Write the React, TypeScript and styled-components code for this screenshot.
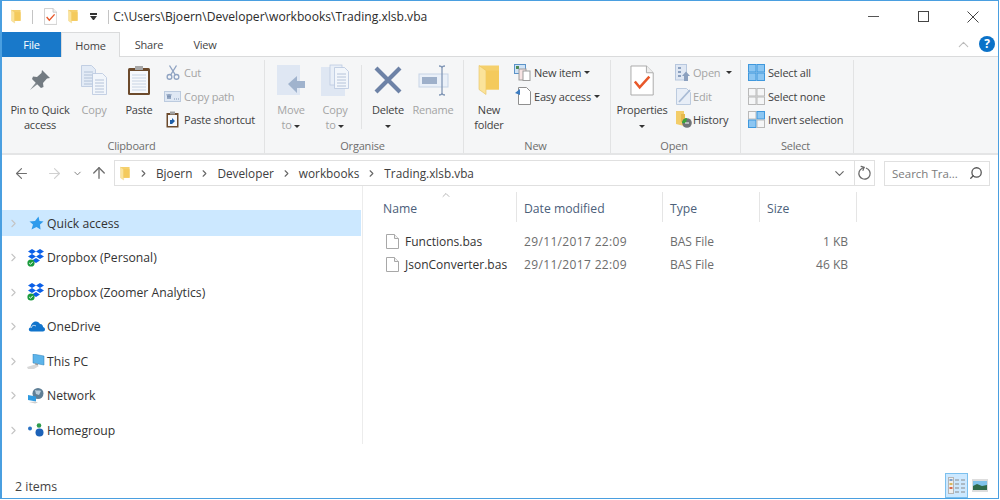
import React from 'react';
import styled, { createGlobalStyle } from 'styled-components';
import { ArrowLeft, ArrowRight, ArrowUp, ChevronDown, ChevronRight, ChevronUp, RotateCw, Search } from 'lucide-react';

const GlobalStyle = createGlobalStyle`
  html, body { margin: 0; padding: 0; background: #fff; }
  * { box-sizing: border-box; }
  body { font-family: "Open Sans", "Noto Sans", sans-serif; font-size: 11px; letter-spacing: -0.2px; color: #3f3f3f; }
`;

// ---- icons ----
const Fold = ({ w, h }: { w: number; h: number }) => (
  <svg width={w} height={h} viewBox="0 0 22 30">
    <path d="M1 0.5h20v24H6z" fill="#f5d06c" />
    <path d="M1 0.5l7 5v24l-7-5z" fill="#fbe39a" stroke="#e8c25f" strokeWidth="0.6" />
    <path d="M8 5.5h13v19H8z" fill="#f4ca5c" />
  </svg>
);

const CheckPage = ({ s }: { s: number }) => (
  <svg width={s * 0.78} height={s} viewBox="0 0 25 32">
    <path d="M1 1h16l7 7v23H1z" fill="#fff" stroke="#a9a9a9" />
    <path d="M17 1v7h7" fill="#eee" stroke="#a9a9a9" />
    <path d="M5 17l5 6 10-11" fill="none" stroke="#e8582a" strokeWidth="2.6" />
  </svg>
);

const Pin = () => (
  <svg width="24" height="24" viewBox="0 0 24 24">
    <path d="M2 22l7-9 2 2z" fill="#858c92" />
    <path d="M14 2l8 8-3 .5-4 4.500.5 4-2.500 1-9-9 1-2.500 4 .5 4.500-4z" fill="#737b82" />
  </svg>
);

const PageLines = ({ x, y, fill = '#e3ebf6' }: { x: number; y: number; fill?: string }) => (
  <g transform={`translate(${x} ${y})`}>
    <path d="M.5.5h10l4 4v17H.5z" fill={fill} stroke="#b7c7de" strokeWidth="0.8" />
    <path d="M3 7h9M3 10h9M3 13h9M3 16h9M3 19h9" stroke="#a6b8d2" strokeWidth="0.8" />
  </g>
);

const CopyLarge = () => (
  <svg width="27" height="31" viewBox="0 0 27 31">
    <PageLines x={0} y={0} />
    <PageLines x={11} y={8} fill="#f2f6fb" />
  </svg>
);

const Clipboard = () => (
  <svg width="24" height="31" viewBox="0 0 24 31">
    <rect x="1" y="3" width="22" height="27" rx="1.500" fill="#6c4a2c" />
    <rect x="3" y="6" width="18" height="22" fill="#f6f8fb" />
    <path d="M5 10h14M5 13h14M5 16h14M5 19h14M5 22h14M5 25h14" stroke="#c8d4e4" />
    <rect x="8" y="1" width="8" height="4" fill="#a7a7a7" />
  </svg>
);

const Cut = () => (
  <svg width="14" height="17" viewBox="0 0 16 18" fill="none" stroke="#8fa3c2" strokeWidth="1.500">
    <circle cx="4" cy="14" r="2.700" />
    <circle cx="12" cy="14" r="2.700" />
    <path d="M5.500 11.500L12 1M10.500 11.500L4 1" />
  </svg>
);

const CopyPath = () => (
  <svg width="17" height="11" viewBox="0 0 17 11">
    <rect x="0.500" y="0.500" width="16" height="10" fill="#dfe8f4" stroke="#bccbdf" />
    <path d="M3 3l1 5 1-5 1 5 1-5" fill="none" stroke="#7f95b5" />
    <path d="M10 8h1M12 8h1M14 8h1" stroke="#7f95b5" />
  </svg>
);

const PasteShortcut = () => (
  <svg width="13" height="17" viewBox="0 0 13 17">
    <rect x="0.500" y="2" width="12" height="14.500" fill="#6c4a2c" />
    <rect x="2" y="4" width="9" height="11" fill="#f6f8fb" />
    <rect x="4" y="0.500" width="5" height="3" fill="#a0a0a0" />
    <path d="M4 13V9h2V7l3 3-3 3z" fill="#1f5fa8" />
  </svg>
);

const MoveTo = () => (
  <svg width="30" height="31" viewBox="0 0 30 31">
    <rect x="1" y="0" width="23" height="30" fill="#dfe7f3" />
    <path d="M12 19l9-8v5h8v7h-8v5z" fill="#a0b3cd" />
  </svg>
);

const CopyTo = () => (
  <svg width="30" height="33" viewBox="0 0 30 33">
    <rect x="1" y="3" width="24" height="29" fill="#dfe7f3" />
    <rect x="10" y="1" width="12" height="20" fill="#e9eff7" stroke="#b7c7de" strokeWidth="0.700" />
    <PageLines x={14} y={3} fill="#f2f6fb" />
  </svg>
);

const DeleteX = () => (
  <svg width="28" height="28" viewBox="0 0 28 28">
    <path d="M2 2l24 24M26 2L2 26" stroke="#6d82a6" strokeWidth="4.200" />
  </svg>
);

const RenameIcon = () => (
  <svg width="31" height="31" viewBox="0 0 31 31">
    <rect x="1" y="9" width="29" height="13" fill="#eaf0f8" stroke="#c7d4e6" />
    <rect x="4" y="12" width="15" height="7" fill="#9eb0ca" />
    <path d="M21 1c2 0 3 .5 3 2v25c0 1.500 1 2 3 2M27 1c-2 0-3 .5-3 2M21 30c2 0 3-.5 3-2" fill="none" stroke="#8297b6" strokeWidth="1.300" />
  </svg>
);

const NewItem = () => (
  <svg width="17" height="17" viewBox="0 0 17 17">
    <rect x="0.500" y="0.500" width="11" height="9" fill="#cfe3f6" stroke="#5c93c8" />
    <rect x="2" y="2" width="3" height="3" fill="#4f8c57" />
    <rect x="5" y="5" width="7" height="11" fill="#f7e3e3" stroke="#9b9b9b" />
    <rect x="9" y="7" width="7" height="9.500" fill="#fff" stroke="#9b9b9b" />
  </svg>
);

const EasyAccess = () => (
  <svg width="16" height="18" viewBox="0 0 16 18">
    <path d="M3.500.5h8l4 4v13h-12z" fill="#fff" stroke="#8f8f8f" />
    <path d="M0 6l5-4v6z" fill="#3d7cc0" />
  </svg>
);

const OpenIcon = () => (
  <svg width="17" height="17" viewBox="0 0 17 17">
    <rect x="0.500" y="0.500" width="11" height="15.500" fill="#dfe7f3" stroke="#b7c7de" />
    <path d="M3 3h3v2H3zM3 7h3v2H3zM3 11h3v2H3z" fill="#8ba0bf" />
    <path d="M7 12l4-4.500 4 4.500h-2v5H9v-5z" fill="#8ba0bf" />
  </svg>
);

const EditIcon = () => (
  <svg width="15" height="17" viewBox="0 0 15 17">
    <path d="M.5.5h10l4 4v12H.5z" fill="#e8eef7" stroke="#bccbdf" />
    <path d="M3 14L14 2" stroke="#a9bbd5" strokeWidth="1.800" />
  </svg>
);

const HistoryIcon = () => (
  <svg width="16" height="17" viewBox="0 0 16 17">
    <path d="M0 0h8v15l-8-2z" fill="#f3cd69" />
    <path d="M5 3h4v8H5z" fill="#e6b94c" />
    <circle cx="11" cy="12" r="4.800" fill="#6f7478" />
    <path d="M6 12a5 5 0 0 1 5-5l-1 5z" fill="#3aa33a" />
    <path d="M9 12h4" stroke="#fff" />
  </svg>
);

const SelectGrid = ({ on }: { on: boolean[] }) => (
  <svg width="17" height="17" viewBox="0 0 17 17">
    {[0, 1, 2, 3].map((i) => (
      <rect
        key={i}
        x={i % 2 === 0 ? 0.5 : 9}
        y={i < 2 ? 0.5 : 9}
        width="7.500"
        height="7.500"
        fill={on[i] ? '#8cc6f2' : '#f5f6f7'}
        stroke={on[i] ? '#3f98dd' : '#b9b9b9'}
      />
    ))}
  </svg>
);

const SmallFile = () => (
  <svg width="13" height="15" viewBox="0 0 13 15">
    <path d="M.5.5h8l4 4v10H.5z" fill="#fff" stroke="#a8a8a8" />
    <path d="M8.500.5v4h4" fill="#f2f2f2" stroke="#a8a8a8" />
  </svg>
);

const Star = () => (
  <svg width="15" height="15" viewBox="0 0 15 15">
    <path d="M9.500.5l1 4.500 4 .5-3.500 3 .5 5-4-2.500-5 2.500 1.500-5L.5 5.500l5.500-.5z" fill="#2e9bec" />
  </svg>
);

const Dropbox = () => (
  <svg width="18" height="18" viewBox="0 0 18 18">
    <path d="M5 0l4 2.500L5 5 1 2.500zM13 0l4 2.500L13 5 9 2.500zM5 5l4 2.500L5 10 1 7.500zM13 5l4 2.500L13 10 9 7.500zM9 9l4 2.500L9 14l-4-2.500z" fill="#0a5fe8" />
    <circle cx="4" cy="14" r="3.600" fill="#1a9b3c" />
    <path d="M2.200 14l1.300 1.300 2.300-2.500" fill="none" stroke="#fff" strokeWidth="1" />
  </svg>
);

const OneDrive = () => (
  <svg width="17" height="11" viewBox="0 0 17 11">
    <path d="M3 10.500C.5 10.500 0 7 2.500 6.500 3 3 5 .5 8 .5c2 0 3 1 4 2.500 2.500 0 3 2 3 3 1.500.5 2 1.500 2 2.500s-1 2-2 2z" fill="#1174cc" />
    <path d="M3 7C4 4 6 4 8 5" fill="none" stroke="#fff" strokeWidth="0.800" />
  </svg>
);

const ThisPC = () => (
  <svg width="18" height="15" viewBox="0 0 18 15">
    <path d="M6 0l11 2v9L6 9z" fill="#5db4ea" stroke="#2b7fb8" strokeWidth="0.500" />
    <path d="M0 13l8-2.500 4 1.500-5 3H1z" fill="#d8d8d8" />
    <path d="M8 9l3 1v1.500L8 10.500z" fill="#9a9a9a" />
  </svg>
);

const Network = () => (
  <svg width="16" height="16" viewBox="0 0 16 16">
    <circle cx="10" cy="5.500" r="5.500" fill="#5f7f96" />
    <path d="M7 2c2 1 5 0 6 1l-2 4-3-1z" fill="#b9cddb" />
    <path d="M0 7l8 1.500v5L0 12z" fill="#2f9ae0" />
    <path d="M1 14l6 1.500 3-1-3-1z" fill="#cfcfcf" />
  </svg>
);

const Homegroup = () => (
  <svg width="16" height="14" viewBox="0 0 16 14">
    <circle cx="2" cy="5.500" r="2" fill="#2a72c4" />
    <circle cx="11" cy="2.500" r="2.300" fill="#2e9b4c" />
    <circle cx="11.500" cy="9.500" r="4" fill="#1d62b8" />
  </svg>
);

const DetailsView = () => (
  <svg width="18" height="17" viewBox="0 0 18 17">
    <rect x="0.500" y="0.500" width="5" height="16" fill="#eee" stroke="#b5b5b5" />
    <path d="M1.500 3h3" stroke="#7da0c8" strokeWidth="2" />
    <path d="M1.500 7h3" stroke="#d8b860" strokeWidth="2" />
    <path d="M1.500 11h3" stroke="#d9664a" strokeWidth="2" />
    <path d="M7 3h4M13 3h4M7 7h4M13 7h4M7 11h4M13 11h4M7 15h4M13 15h4" stroke="#8a8a8a" />
  </svg>
);

const ThumbView = () => (
  <svg width="16" height="13" viewBox="0 0 16 13">
    <rect x="0" y="0" width="16" height="13" fill="#ddd" />
    <rect x="1" y="2" width="14" height="9" fill="#7fc2ea" />
    <path d="M1 7l4-2 5 2 5-1v5H1z" fill="#2f6a4a" />
  </svg>
);

// ---- data ----
const navItems = [
  { label: 'Quick access', icon: <Star />, selected: true },
  { label: 'Dropbox (Personal)', icon: <Dropbox /> },
  { label: 'Dropbox (Zoomer Analytics)', icon: <Dropbox /> },
  { label: 'OneDrive', icon: <OneDrive /> },
  { label: 'This PC', icon: <ThisPC /> },
  { label: 'Network', icon: <Network /> },
  { label: 'Homegroup', icon: <Homegroup /> },
];

const files = [
  { name: 'Functions.bas', date: '29/11/2017 22:09', type: 'BAS File', size: '1 KB' },
  { name: 'JsonConverter.bas', date: '29/11/2017 22:09', type: 'BAS File', size: '46 KB' },
];

const App: React.FC = () => (
  <Frame>
    <GlobalStyle />
    <TitleBar>
      <QuickIcons>
        <Fold w={10} h={15} />
        <TitleSep />
        <CheckPage s={17} />
        <Fold w={10} h={15} />
        <QatDrop />
        <TitleSep />
      </QuickIcons>
      <TitleText>C:\Users\Bjoern\Developer\workbooks\Trading.xlsb.vba</TitleText>
      <WindowControls>
        <WinBtn>
          <svg width="11" height="11" viewBox="0 0 11 11"><path d="M0 5.500h11" stroke="#555" /></svg>
        </WinBtn>
        <WinBtn>
          <svg width="11" height="11" viewBox="0 0 11 11"><rect x="0.500" y="0.500" width="10" height="10" fill="none" stroke="#444" /></svg>
        </WinBtn>
        <WinBtn>
          <svg width="12" height="12" viewBox="0 0 12 12"><path d="M.5.5l11 11M11.500.5l-11 11" stroke="#444" /></svg>
        </WinBtn>
      </WindowControls>
    </TitleBar>

    <TabStrip>
      <FileTab>File</FileTab>
      <HomeTab>Home</HomeTab>
      <Tab $w={58}>Share</Tab>
      <Tab $w={54}>View</Tab>
      <TabRight>
        <ChevronUp size={17} color="#bdbdbd" strokeWidth={1.5} />
        <HelpBadge>?</HelpBadge>
      </TabRight>
    </TabStrip>

    <Ribbon>
      <Group $w={263}>
        <GroupBody>
          <LeadIn $w={6} />
          <LargeBtn $w={64}>
            <IconSlot><Pin /></IconSlot>
            <span>Pin to Quick</span>
            <span>access</span>
          </LargeBtn>
          <LargeBtn $w={44} $off>
            <IconSlot><CopyLarge /></IconSlot>
            <span>Copy</span>
          </LargeBtn>
          <LargeBtn $w={46}>
            <IconSlot><Clipboard /></IconSlot>
            <span>Paste</span>
          </LargeBtn>
          <SmallCol $left={2} $labelGap={3}>
            <SmallBtn $off><SmallIcon><Cut /></SmallIcon>Cut</SmallBtn>
            <SmallBtn $off><SmallIcon><CopyPath /></SmallIcon>Copy path</SmallBtn>
            <SmallBtn><SmallIcon><PasteShortcut /></SmallIcon>Paste shortcut</SmallBtn>
          </SmallCol>
        </GroupBody>
        <GroupLabel>Clipboard</GroupLabel>
      </Group>

      <Group $w={199}>
        <GroupBody>
          <LargeBtn $w={52} $off>
            <IconSlot><MoveTo /></IconSlot>
            <span>Move</span>
            <span>to <CaretMark /></span>
          </LargeBtn>
          <LargeBtn $w={36} $off>
            <IconSlot><CopyTo /></IconSlot>
            <span>Copy</span>
            <span>to <CaretMark /></span>
          </LargeBtn>
          <RibbonDivider />
          <LargeBtn $w={36}>
            <IconSlot><DeleteX /></IconSlot>
            <span>Delete</span>
            <span><CaretMark /></span>
          </LargeBtn>
          <LargeBtn $w={54} $off>
            <IconSlot><RenameIcon /></IconSlot>
            <span>Rename</span>
          </LargeBtn>
        </GroupBody>
        <GroupLabel>Organise</GroupLabel>
      </Group>

      <Group $w={147}>
        <GroupBody>
          <LeadIn $w={2} />
          <LargeBtn $w={46}>
            <IconSlot><Fold w={22} h={30} /></IconSlot>
            <span>New</span>
            <span>folder</span>
          </LargeBtn>
          <SmallCol $left={2} $labelGap={3}>
            <SmallBtn><SmallIcon><NewItem /></SmallIcon>New item <CaretMark /></SmallBtn>
            <SmallBtn><SmallIcon><EasyAccess /></SmallIcon>Easy access <CaretMark /></SmallBtn>
          </SmallCol>
        </GroupBody>
        <GroupLabel>New</GroupLabel>
      </Group>

      <Group $w={130}>
        <GroupBody>
          <LeadIn $w={1} />
          <LargeBtn $w={60}>
            <IconSlot><CheckPage s={31} /></IconSlot>
            <span>Properties</span>
            <span><CaretMark /></span>
          </LargeBtn>
          <SmallCol $left={3} $labelGap={1}>
            <SmallBtn $off><SmallIcon><OpenIcon /></SmallIcon>Open <CaretMark $shift={5} /></SmallBtn>
            <SmallBtn $off><SmallIcon><EditIcon /></SmallIcon>Edit</SmallBtn>
            <SmallBtn><SmallIcon><HistoryIcon /></SmallIcon>History</SmallBtn>
          </SmallCol>
        </GroupBody>
        <GroupLabel>Open</GroupLabel>
      </Group>

      <Group $w={113}>
        <GroupBody>
          <SmallCol $left={7} $labelGap={3}>
            <SmallBtn><SmallIcon><SelectGrid on={[true, true, true, true]} /></SmallIcon>Select all</SmallBtn>
            <SmallBtn><SmallIcon><SelectGrid on={[false, false, false, false]} /></SmallIcon>Select none</SmallBtn>
            <SmallBtn><SmallIcon><SelectGrid on={[false, true, true, false]} /></SmallIcon>Invert selection</SmallBtn>
          </SmallCol>
        </GroupBody>
        <GroupLabel>Select</GroupLabel>
      </Group>
    </Ribbon>

    <AddressRow>
      <NavButtons>
        <NavBtn $w={32}><ArrowLeft size={17} color="#6f6f6f" strokeWidth={1.6} /></NavBtn>
        <NavBtn $w={34}><ArrowRight size={17} color="#d0d0d0" strokeWidth={1.6} /></NavBtn>
        <NavBtn $w={14}><ChevronDown size={11} color="#777" strokeWidth={2} /></NavBtn>
        <NavBtn $w={30}><ArrowUp size={18} color="#6f6f6f" strokeWidth={1.8} /></NavBtn>
      </NavButtons>
      <AddressBox>
        <Fold w={10} h={15} />
        <Crumbs>
          <ChevronRight size={11} color="#666" strokeWidth={2.4} />
          <Crumb>Bjoern</Crumb>
          <ChevronRight size={11} color="#666" strokeWidth={2.4} />
          <Crumb>Developer</Crumb>
          <ChevronRight size={11} color="#666" strokeWidth={2.4} />
          <Crumb>workbooks</Crumb>
          <ChevronRight size={11} color="#666" strokeWidth={2.4} />
          <Crumb>Trading.xlsb.vba</Crumb>
        </Crumbs>
        <ChevronDown size={15} color="#666" strokeWidth={1.8} />
      </AddressBox>
      <RefreshBox><RefreshGlyph><RotateCw size={15} color="#6a6a6a" strokeWidth={2} /></RefreshGlyph></RefreshBox>
      <SearchBox>
        <span>Search Tra...</span>
        <MirrorIcon><Search size={14} color="#555" strokeWidth={2.2} /></MirrorIcon>
      </SearchBox>
    </AddressRow>

    <Main>
      <NavPane>
        {navItems.map((item) => (
          <NavRow key={item.label} $selected={item.selected}>
            <ChevronRight size={13} color="#c4c4c4" strokeWidth={2} />
            <NavIcon>{item.icon}</NavIcon>
            <span>{item.label}</span>
          </NavRow>
        ))}
      </NavPane>
      <Content>
        <HeaderRow>
          <SortCaret><ChevronUp size={12} color="#9a9a9a" strokeWidth={1.4} /></SortCaret>
          <HeaderCell $first>Name</HeaderCell>
          <HeaderCell>Date modified</HeaderCell>
          <HeaderCell>Type</HeaderCell>
          <HeaderCell>Size</HeaderCell>
        </HeaderRow>
        <FileList>
          {files.map((f) => (
            <FileRow key={f.name}>
              <NameCell><SmallFile />{f.name}</NameCell>
              <DateCell>{f.date}</DateCell>
              <MetaCell>{f.type}</MetaCell>
              <SizeCell>{f.size}</SizeCell>
            </FileRow>
          ))}
        </FileList>
      </Content>
    </Main>

    <StatusBar>
      <StatusText>2 items</StatusText>
      <ViewSwitch>
        <ViewBtn $w={23} $active><DetailsView /></ViewBtn>
        <ViewBtn $w={18}><ThumbView /></ViewBtn>
      </ViewSwitch>
    </StatusBar>
  </Frame>
);

// ---- styled ----
const Frame = styled.div`
  width: 999px;
  height: 499px;
  display: flex;
  flex-direction: column;
  background: #fff;
  border: 1px solid #4a9fe0;
  border-left-width: 2px;
  overflow: hidden;
`;

const TitleBar = styled.div`
  height: 31px;
  flex: none;
  display: flex;
  align-items: center;
  padding-left: 9px;
`;

const QuickIcons = styled.div`
  display: flex;
  align-items: center;
  gap: 11px;
`;

const TitleSep = styled.div`
  width: 1px;
  height: 14px;
  background: #c4c4c4;
`;

const QatDrop = styled.div`
  width: 7px;
  height: 7px;
  margin-left: 1px;
  border-top: 2px solid #333;
  &::after {
    content: '';
    display: block;
    margin-top: 1px;
    border: 3.5px solid transparent;
    border-top: 4px solid #333;
    border-bottom: 0;
  }
`;

const TitleText = styled.div`
  margin-left: 4px;
  font-size: 12.1px;
  letter-spacing: 0;
  color: #2b2b2b;
  white-space: nowrap;
`;

const WindowControls = styled.div`
  margin-left: auto;
  display: flex;
`;

const WinBtn = styled.div`
  width: 50px;
  height: 30px;
  display: flex;
  align-items: center;
  justify-content: center;
`;

const TabStrip = styled.div`
  height: 25px;
  flex: none;
  display: flex;
  align-items: stretch;
`;

const FileTab = styled.div`
  width: 59px;
  display: flex;
  align-items: center;
  justify-content: center;
  background: #1979ca;
  color: #fff;
`;

const HomeTab = styled.div`
  width: 59px;
  display: flex;
  align-items: center;
  justify-content: center;
  background: #f5f6f7;
  border: 1px solid #dadbdc;
  border-bottom: 0;
  color: #444;
`;

const Tab = styled.div<{ $w: number }>`
  width: ${({ $w }) => $w}px;
  display: flex;
  align-items: center;
  justify-content: center;
  color: #444;
  border-bottom: 1px solid #dadbdc;
`;

const TabRight = styled.div`
  flex: 1;
  display: flex;
  align-items: center;
  justify-content: flex-end;
  gap: 7px;
  padding-right: 3px;
  border-bottom: 1px solid #dadbdc;
`;

const HelpBadge = styled.div`
  width: 16px;
  height: 16px;
  border-radius: 50%;
  background: #0b72c8;
  color: #fff;
  font-size: 12px;
  font-weight: 700;
  line-height: 16px;
  text-align: center;
`;

const Ribbon = styled.div`
  height: 98px;
  flex: none;
  display: flex;
  background: #f5f6f7;
  border-bottom: 2px solid #e4e5e6;
`;

const Group = styled.div<{ $w: number }>`
  width: ${({ $w }) => $w}px;
  flex: none;
  display: flex;
  flex-direction: column;
  margin-top: 3px;
  border-right: 1px solid #e2e3e4;
`;

const GroupBody = styled.div`
  flex: 1;
  min-height: 0;
  display: flex;
  align-items: flex-start;
  padding-top: 2px;
`;

const LeadIn = styled.div<{ $w: number }>`
  width: ${({ $w }) => $w}px;
  flex: none;
`;

const GroupLabel = styled.div`
  height: 18px;
  padding-right: 3px;
  text-align: center;
  color: #6e6e6e;
  line-height: 22px;
`;

const LargeBtn = styled.div<{ $w: number; $off?: boolean }>`
  width: ${({ $w }) => $w}px;
  flex: none;
  display: flex;
  flex-direction: column;
  align-items: center;
  white-space: nowrap;
  line-height: 15px;
  color: ${({ $off }) => ($off ? '#a4a4a4' : '#3f3f3f')};
`;

const IconSlot = styled.div`
  height: 36px;
  margin-bottom: 4px;
  display: flex;
  align-items: center;
  justify-content: center;
`;

const CaretMark = styled.span<{ $shift?: number }>`
  display: inline-block;
  vertical-align: middle;
  margin-left: ${({ $shift }) => $shift ?? 0}px;
  border: 3px solid transparent;
  border-top: 3.5px solid #333;
  border-bottom: 0;
`;

const RibbonDivider = styled.div`
  width: 1px;
  height: 64px;
  flex: none;
  margin: 3px 8px 0;
  background: #e2e3e4;
`;

const SmallBtn = styled.div<{ $off?: boolean }>`
  height: 23.5px;
  display: flex;
  align-items: center;
  white-space: nowrap;
  color: ${({ $off }) => ($off ? '#a4a4a4' : '#3f3f3f')};
`;

const SmallCol = styled.div<{ $left: number; $labelGap: number }>`
  display: flex;
  flex-direction: column;
  margin-left: ${({ $left }) => $left}px;
  margin-top: -1px;

  ${SmallBtn} {
    gap: ${({ $labelGap }) => $labelGap}px;
  }
`;

const SmallIcon = styled.div`
  width: 17px;
  display: flex;
  align-items: center;
  justify-content: center;
`;

const AddressRow = styled.div`
  height: 31px;
  flex: none;
  display: flex;
  align-items: center;
  padding-top: 5px;
`;

const NavButtons = styled.div`
  display: flex;
  align-items: center;
  padding-left: 4px;
  width: 112px;
`;

const NavBtn = styled.div<{ $w: number }>`
  width: ${({ $w }) => $w}px;
  display: flex;
  align-items: center;
  justify-content: center;
`;

const AddressBox = styled.div`
  width: 740px;
  height: 26px;
  display: flex;
  align-items: center;
  padding: 0 7px 0 5px;
  border: 1px solid #e0e0e0;
  border-right: 0;
`;

const Crumbs = styled.div`
  flex: 1;
  display: flex;
  align-items: center;
  gap: 7px;
  margin-left: 8px;
  font-size: 11.8px;
  letter-spacing: 0;
  color: #404040;
`;

const Crumb = styled.span`
  white-space: nowrap;
`;

const RefreshBox = styled.div`
  width: 21px;
  height: 26px;
  display: flex;
  align-items: center;
  justify-content: center;
  border: 1px solid #e0e0e0;
`;

const RefreshGlyph = styled.span`
  display: flex;
  transform: rotate(-70deg);
`;

const SearchBox = styled.div`
  width: 106px;
  height: 25px;
  margin-left: 9px;
  display: flex;
  align-items: center;
  justify-content: space-between;
  padding: 0 6px 0 7px;
  border: 1px solid #e0e0e0;
  color: #7b7b7b;
  font-size: 11.5px;
  letter-spacing: 0;
`;

const MirrorIcon = styled.span`
  display: flex;
  transform: scaleX(-1);
`;

const Main = styled.div`
  flex: 1;
  min-height: 0;
  display: flex;
`;

const NavPane = styled.div`
  width: 361px;
  flex: none;
  display: flex;
  flex-direction: column;
  gap: 8.5px;
  padding-top: 24px;
  padding-right: 1px;
  border-right: 1px solid #ececec;
  margin-bottom: 28px;
`;

const NavRow = styled.div<{ $selected?: boolean }>`
  height: 26px;
  flex: none;
  display: flex;
  align-items: center;
  padding-left: 5px;
  font-size: 12.2px;
  letter-spacing: 0;
  color: #333;
  background: ${({ $selected }) => ($selected ? '#cce8ff' : 'transparent')};
`;

const NavIcon = styled.div`
  width: 20px;
  margin-left: 6px;
  margin-right: 1px;
  display: flex;
  justify-content: center;
`;

const Content = styled.div`
  flex: 1;
  display: flex;
  flex-direction: column;
  padding-top: 6px;
`;

const HeaderRow = styled.div`
  position: relative;
  display: grid;
  grid-template-columns: 154px 146px 97px 97px;
  height: 30px;
`;

const SortCaret = styled.div`
  position: absolute;
  left: 77px;
  top: -3px;
`;

const HeaderCell = styled.div<{ $first?: boolean }>`
  display: flex;
  align-items: center;
  padding-left: ${({ $first }) => ($first ? 20 : 7)}px;
  padding-top: 2px;
  font-size: 12.2px;
  letter-spacing: 0;
  color: #4c607a;
  border-right: 1px solid #e5e5e5;
`;

const FileList = styled.div`
  display: flex;
  flex-direction: column;
  padding-top: 8px;
`;

const FileRow = styled.div`
  display: grid;
  grid-template-columns: 154px 146px 97px 97px;
  height: 23px;
  align-items: center;
  font-size: 12px;
  letter-spacing: 0;
`;

const NameCell = styled.div`
  display: flex;
  align-items: center;
  gap: 6px;
  padding-left: 23px;
  color: #333;
  white-space: nowrap;
`;

const MetaCell = styled.div`
  padding-left: 7px;
  color: #6d6d6d;
`;

const DateCell = styled(MetaCell)`
  letter-spacing: 0.35px;
  white-space: nowrap;
`;

const SizeCell = styled.div`
  text-align: right;
  padding-right: 9px;
  color: #6d6d6d;
`;

const StatusBar = styled.div`
  height: 26px;
  flex: none;
  display: flex;
  align-items: center;
  justify-content: space-between;
  padding: 0 9px 0 13px;
  font-size: 12.4px;
  letter-spacing: 0;
  color: #444;
`;

const StatusText = styled.span`
  padding-top: 3px;
`;

const ViewSwitch = styled.div`
  display: flex;
  align-items: center;
  gap: 3px;
`;

const ViewBtn = styled.div<{ $w: number; $active?: boolean }>`
  width: ${({ $w }) => $w}px;
  height: 25px;
  display: flex;
  align-items: center;
  justify-content: center;
  background: ${({ $active }) => ($active ? '#cce8ff' : 'transparent')};
  border: 1px solid ${({ $active }) => ($active ? '#7cc0ee' : 'transparent')};
`;

export default App;
